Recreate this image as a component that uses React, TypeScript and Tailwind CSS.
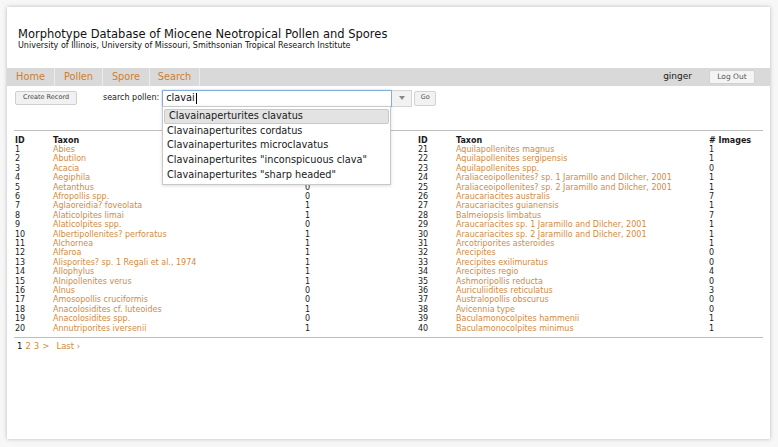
const leftRows: [number, string, number][] = [
  [1, "Abies", 1],
  [2, "Abutilon", 1],
  [3, "Acacia", 1],
  [4, "Aegiphila", 1],
  [5, "Aetanthus", 0],
  [6, "Afropollis spp.", 0],
  [7, "Aglaoreidia? foveolata", 1],
  [8, "Alaticolpites limai", 1],
  [9, "Alaticolpites spp.", 0],
  [10, "Albertipollenites? perforatus", 1],
  [11, "Alchornea", 1],
  [12, "Alfaroa", 1],
  [13, "Alisporites? sp. 1 Regali et al., 1974", 1],
  [14, "Allophylus", 1],
  [15, "Alnipollenites verus", 1],
  [16, "Alnus", 0],
  [17, "Amosopollis cruciformis", 0],
  [18, "Anacolosidites cf. luteoides", 1],
  [19, "Anacolosidites spp.", 0],
  [20, "Annutriporites iversenii", 1],
];

const rightRows: [number, string, number][] = [
  [21, "Aquilapollenites magnus", 1],
  [22, "Aquilapollenites sergipensis", 1],
  [23, "Aquilapollenites spp.", 0],
  [24, "Araliaceoipollenites? sp. 1 Jaramillo and Dilcher, 2001", 1],
  [25, "Araliaceoipollenites? sp. 2 Jaramillo and Dilcher, 2001", 1],
  [26, "Araucariacites australis", 7],
  [27, "Araucariacites guianensis", 1],
  [28, "Balmeiopsis limbatus", 7],
  [29, "Araucariacites sp. 1 Jaramillo and Dilcher, 2001", 1],
  [30, "Araucariacites sp. 2 Jaramillo and Dilcher, 2001", 1],
  [31, "Arcotriporites asteroides", 1],
  [32, "Arecipites", 0],
  [33, "Arecipites exilimuratus", 0],
  [34, "Arecipites regio", 4],
  [35, "Ashmoripollis reducta", 0],
  [36, "Auriculiidites reticulatus", 3],
  [37, "Australopollis obscurus", 0],
  [38, "Avicennia type", 0],
  [39, "Baculamonocolpites hammenii", 1],
  [40, "Baculamonocolpites minimus", 1],
];

const suggestions = [
  "Clavainaperturites clavatus",
  "Clavainaperturites cordatus",
  "Clavainaperturites microclavatus",
  'Clavainaperturites "inconspicuous clava"',
  'Clavainaperturites "sharp headed"',
];

function TaxonTable({ rows, taxonWidth }: { rows: [number, string, number][]; taxonWidth: string }) {
  return (
    <div className="text-[8px] leading-[9.4px] text-[#1a1a1a]">
      <div className="flex font-bold">
        <div className="w-[38px]">ID</div>
        <div className={taxonWidth}>Taxon</div>
        <div># Images</div>
      </div>
      {rows.map(([id, name, n]) => (
        <div key={id} className="flex">
          <div className="w-[38px]">{id}</div>
          <div className={`${taxonWidth} text-[#d38a3d]`}>{name}</div>
          <div>{n}</div>
        </div>
      ))}
    </div>
  );
}

export default function App() {
  return (
    <div className="w-[778px] h-[447px] bg-[#f7f7f7] pt-[7px] pl-[7px] font-['DejaVu_Sans',sans-serif]">
      <div className="relative w-[763px] h-[432px] bg-white shadow-[0_0_4px_rgba(0,0,0,0.25)]">
        {/* header */}
        <div className="pt-[20px] pl-[11px] text-[#111]">
          <div className="text-[11.5px] leading-[14px]">
            Morphotype Database of Miocene Neotropical Pollen and Spores
          </div>
          <div className="text-[8px] leading-[10px]">
            University of Illinois, University of Missouri, Smithsonian Tropical Research Institute
          </div>
        </div>

        {/* nav */}
        <div className="mt-[17px] h-[18px] bg-[#d9d9d9] flex items-center">
          <div className="w-[48px] h-full border-r border-[#ebebeb] flex items-center justify-center text-[9.75px] text-[#cf7f2e]">Home</div>
          <div className="w-[48px] h-full border-r border-[#ebebeb] flex items-center justify-center text-[9.75px] text-[#cf7f2e]">Pollen</div>
          <div className="w-[47px] h-full border-r border-[#ebebeb] flex items-center justify-center text-[9.75px] text-[#cf7f2e]">Spore</div>
          <div className="w-[50px] h-full border-r border-[#ebebeb] flex items-center justify-center text-[9.75px] text-[#cf7f2e]">Search</div>
          <div className="ml-auto text-[9px] text-[#1a1a1a]">ginger</div>
          <div className="ml-[17px] mr-[15px] w-[46px] h-[14px] bg-[#f4f4f4] border border-[#d2d2d2] rounded-[2px] flex items-center justify-center text-[7.5px] text-[#555]">
            Log Out
          </div>
        </div>

        {/* toolbar */}
        <div className="relative mt-[2px] h-[20px] flex items-center pl-[8px]">
          <div className="w-[62px] h-[14px] bg-[#f1f1f1] border border-[#cfcfcf] rounded-[2px] flex items-center justify-center text-[6.5px] text-[#444]">
            Create Record
          </div>
          <div className="ml-[26px] text-[8px] text-[#1a1a1a]">search pollen:</div>
          <div className="ml-[3px] flex items-center">
            <div className="w-[230px] h-[17px] border border-[#86acd9] shadow-[0_0_2px_#a9c7ec] bg-white flex items-center pl-[3px] text-[9.75px] text-[#111]">
              clavai
              <span className="ml-[1px] w-px h-[11px] bg-black" />
            </div>
            <div className="w-[20px] h-[17px] bg-[#f2f2f2] border border-l-0 border-[#d4d4d4] flex items-center justify-center">
              <svg width="6" height="4" viewBox="0 0 6 4">
                <path d="M0 0 L6 0 L3 4 Z" fill="#888" />
              </svg>
            </div>
            <div className="ml-[2px] w-[22px] h-[15px] bg-[#f2f2f2] border border-[#d2d2d2] rounded-[2px] flex items-center justify-center text-[6.5px] text-[#555]">
              Go
            </div>
          </div>

          {/* autocomplete */}
          <div className="absolute left-[155px] top-[18px] w-[229px] bg-white border border-[#c8c8c8] shadow-[0_1px_3px_rgba(0,0,0,0.15)] pt-[2px] pb-[2px] z-10">
            {suggestions.map((s, i) => (
              <div
                key={s}
                className={`h-[14.7px] flex items-center pl-[4px] text-[9.75px] text-[#1a1a1a] ${
                  i === 0 ? "mx-px bg-[#e3e3e3] border border-[#c9c9c9] rounded-[2px]" : ""
                }`}
              >
                {s}
              </div>
            ))}
          </div>
        </div>

        {/* list */}
        <div className="mt-[22px] mx-[7px] border-t border-[#bdbdbd]">
          <div className="mt-[4.5px] pl-[1px] flex pb-[3.5px] border-b border-[#bdbdbd]">
            <div className="w-[403px]">
              <TaxonTable rows={leftRows} taxonWidth="w-[252px]" />
            </div>
            <div>
              <TaxonTable rows={rightRows} taxonWidth="w-[253px]" />
            </div>
          </div>
          <div className="mt-[3px] pl-[3px] flex items-center gap-[3px] text-[8.5px] leading-[10px] text-[#d38a3d]">
            <span className="text-[#111]">1</span>
            <span>2</span>
            <span>3</span>
            <span>&gt;</span>
            <span className="ml-[4px]">Last ›</span>
          </div>
        </div>
      </div>
    </div>
  );
}
